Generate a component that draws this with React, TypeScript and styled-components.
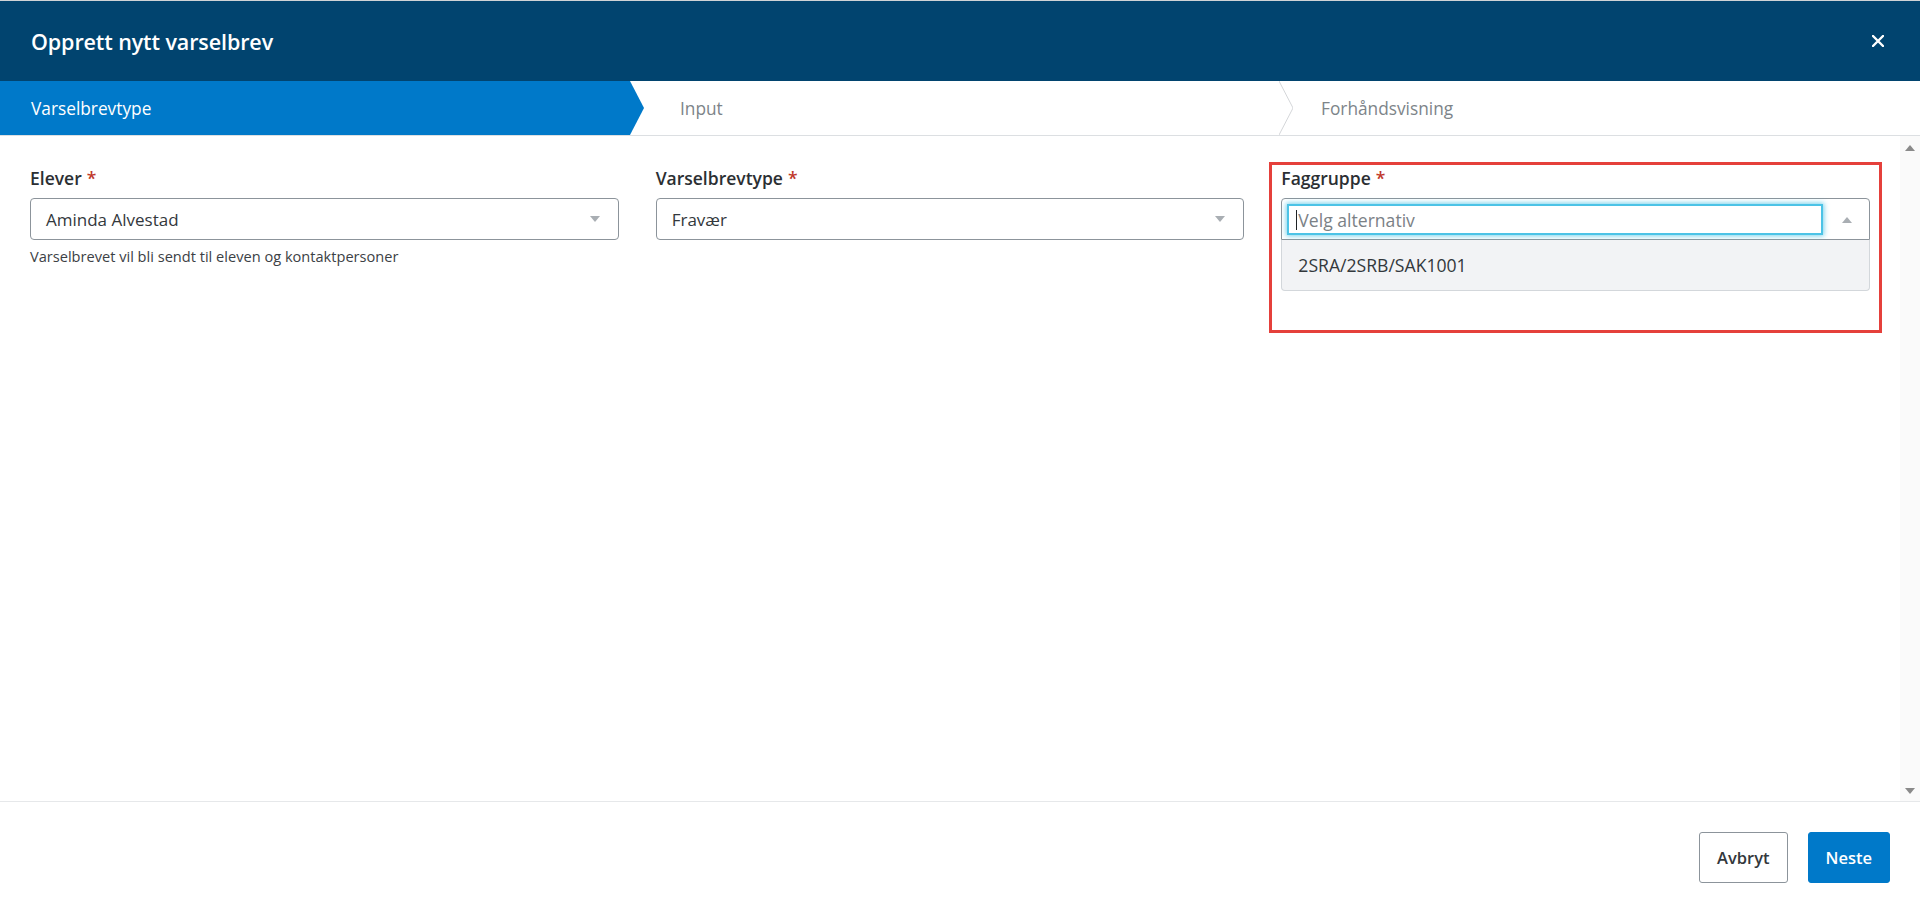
import React from 'react';
import styled, { createGlobalStyle } from 'styled-components';

const GlobalStyle = createGlobalStyle`
  html, body {
    margin: 0;
    padding: 0;
    background: #ffffff;
    font-family: "Open Sans", "Liberation Sans", sans-serif;
  }
  * {
    box-sizing: border-box;
  }
`;

const Modal = styled.div`
  display: flex;
  flex-direction: column;
  height: 100vh;
  width: 100%;
  border-top: 1px solid #cfd3d6;
  background: #ffffff;
`;

const Header = styled.div`
  display: flex;
  align-items: center;
  justify-content: space-between;
  height: 80px;
  padding: 0 35px 0 31px;
  background-color: #01446f;
  flex-shrink: 0;
`;

const Title = styled.h1`
  margin: 0;
  color: #ffffff;
  font-size: 21.5px;
  font-weight: 600;
  letter-spacing: -0.1px;
`;

const CloseButton = styled.button`
  display: flex;
  align-items: center;
  justify-content: center;
  width: 14px;
  height: 14px;
  padding: 0;
  border: none;
  background: none;
  cursor: pointer;
`;

const Steps = styled.div`
  display: flex;
  height: 55px;
  border-bottom: 1px solid #dcdfe2;
  flex-shrink: 0;
`;

const Step = styled.div<{ $active?: boolean; $inset: number }>`
  position: relative;
  flex: 1 1 0;
  min-width: 0;
  display: flex;
  align-items: center;
  padding-left: ${(p) => p.$inset}px;
  background: ${(p) => (p.$active ? '#0079c9' : '#ffffff')};
  color: ${(p) => (p.$active ? '#ffffff' : '#7d8489')};
  font-size: 17.3px;
`;

const StepArrow = styled.svg`
  position: absolute;
  top: 0;
  right: -14px;
  width: 14px;
  height: 100%;
  z-index: 2;
`;

const Body = styled.div`
  flex: 1;
  display: flex;
  min-height: 0;
`;

const Content = styled.div`
  flex: 1;
  padding: 30px 30px 0 30px;
`;

const FieldGrid = styled.div`
  display: grid;
  grid-template-columns: repeat(3, 1fr);
  column-gap: 37px;
  align-items: start;
`;

const Field = styled.div<{ $highlight?: boolean }>`
  position: relative;
  display: flex;
  flex-direction: column;

  ${(p) =>
    p.$highlight &&
    `
    &::after {
      content: '';
      position: absolute;
      left: -12px;
      right: -12px;
      top: -4px;
      height: 165px;
      border: 3px solid #e5403b;
      pointer-events: none;
    }
  `}
`;

const Label = styled.label`
  font-size: 17.5px;
  font-weight: 600;
  line-height: 24px;
  color: #2b2f33;
  margin-bottom: 8px;
`;

const Required = styled.span`
  color: #c0392b;
  margin-left: 5px;
`;

const SelectBox = styled.div`
  display: flex;
  align-items: center;
  justify-content: space-between;
  height: 42px;
  padding: 0 18px 0 15px;
  border: 1px solid #8c949b;
  border-radius: 4px;
  font-size: 17px;
  color: #33383c;
`;

const Caret = styled.span<{ $up?: boolean }>`
  width: 0;
  height: 0;
  border-left: 5px solid transparent;
  border-right: 5px solid transparent;
  ${(p) =>
    p.$up
      ? 'border-bottom: 6px solid #a9aeb3;'
      : 'border-top: 6px solid #a9aeb3;'}
`;

const Hint = styled.div`
  margin-top: 6px;
  font-size: 14.6px;
  line-height: 20px;
  color: #3c4145;
`;

const OpenSelect = styled.div`
  display: flex;
  flex-direction: column;
`;

const SearchRow = styled.div`
  display: flex;
  align-items: center;
  height: 42px;
  padding: 5px 17px 4px 5px;
  border: 1px solid #8c949b;
  border-radius: 4px 4px 0 0;
  gap: 19px;
`;

const SearchInput = styled.div`
  flex: 1;
  display: flex;
  align-items: center;
  height: 100%;
  padding-left: 7px;
  border: 2px solid #4cc3e6;
  box-shadow: 0 0 5px 1px rgba(76, 195, 230, 0.75);
  font-size: 17.6px;
  color: #7b8186;
`;

const TextCursor = styled.span`
  display: inline-block;
  width: 1px;
  height: 20px;
  margin-right: 1px;
  background: #1f2326;
`;

const OptionList = styled.div`
  border: 1px solid #d3d7db;
  border-top: none;
  border-radius: 0 0 4px 4px;
  background: #f2f3f5;
`;

const Option = styled.div`
  height: 50px;
  display: flex;
  align-items: center;
  padding-left: 16px;
  font-size: 17.6px;
  color: #33383c;
`;

const ScrollTrack = styled.div`
  width: 20px;
  display: flex;
  flex-direction: column;
  align-items: center;
  justify-content: space-between;
  padding: 9px 0 7px;
  background: #fafafa;
`;

const ScrollArrow = styled.span<{ $down?: boolean }>`
  width: 0;
  height: 0;
  border-left: 5px solid transparent;
  border-right: 5px solid transparent;
  ${(p) =>
    p.$down
      ? 'border-top: 6px solid #8a8a8a;'
      : 'border-bottom: 6px solid #8a8a8a;'}
`;

const Footer = styled.div`
  display: flex;
  align-items: center;
  justify-content: flex-end;
  gap: 20px;
  height: 111px;
  padding-right: 30px;
  border-top: 1px solid #e6e8ea;
  flex-shrink: 0;
`;

const Button = styled.button<{ $primary?: boolean }>`
  height: 51px;
  padding: 0 17px;
  border-radius: 3px;
  border: 1px solid ${(p) => (p.$primary ? '#0079c9' : '#8c949b')};
  background: ${(p) => (p.$primary ? '#0079c9' : '#ffffff')};
  color: ${(p) => (p.$primary ? '#ffffff' : '#33383c')};
  font-family: "Open Sans", "Liberation Sans", sans-serif;
  font-size: 16.5px;
  font-weight: 600;
  cursor: pointer;
`;

const steps = [
  { title: 'Varselbrevtype', inset: 31 },
  { title: 'Input', inset: 50 },
  { title: 'Forhåndsvisning', inset: 42 },
];

export default function App() {
  return (
    <>
      <GlobalStyle />
      <Modal>
        <Header>
          <Title>Opprett nytt varselbrev</Title>
          <CloseButton aria-label="Lukk">
            <svg width="12" height="12" viewBox="0 0 12 12">
              <path d="M1 1 L11 11 M11 1 L1 11" stroke="#ffffff" strokeWidth="2.4" strokeLinecap="round" />
            </svg>
          </CloseButton>
        </Header>

        <Steps>
          {steps.map((s, i) => (
            <Step key={s.title} $active={i === 0} $inset={s.inset}>
              {s.title}
              {i === 0 && (
                <StepArrow viewBox="0 0 14 55" preserveAspectRatio="none">
                  <polygon points="0,0 14,27.5 0,55" fill="#0079c9" />
                </StepArrow>
              )}
              {i === 1 && (
                <StepArrow viewBox="0 0 14 55" preserveAspectRatio="none">
                  <polyline points="0,0 14,27.5 0,55" fill="#ffffff" stroke="#d3d6d9" strokeWidth="1" />
                </StepArrow>
              )}
            </Step>
          ))}
        </Steps>

        <Body>
          <Content>
            <FieldGrid>
              <Field>
                <Label>
                  Elever<Required>*</Required>
                </Label>
                <SelectBox>
                  Aminda Alvestad
                  <Caret />
                </SelectBox>
                <Hint>Varselbrevet vil bli sendt til eleven og kontaktpersoner</Hint>
              </Field>

              <Field>
                <Label>
                  Varselbrevtype<Required>*</Required>
                </Label>
                <SelectBox>
                  Fravær
                  <Caret />
                </SelectBox>
              </Field>

              <Field $highlight>
                <Label>
                  Faggruppe<Required>*</Required>
                </Label>
                <OpenSelect>
                  <SearchRow>
                    <SearchInput>
                      <TextCursor />
                      Velg alternativ
                    </SearchInput>
                    <Caret $up />
                  </SearchRow>
                  <OptionList>
                    <Option>2SRA/2SRB/SAK1001</Option>
                  </OptionList>
                </OpenSelect>
              </Field>
            </FieldGrid>
          </Content>
          <ScrollTrack>
            <ScrollArrow />
            <ScrollArrow $down />
          </ScrollTrack>
        </Body>

        <Footer>
          <Button>Avbryt</Button>
          <Button $primary>Neste</Button>
        </Footer>
      </Modal>
    </>
  );
}
